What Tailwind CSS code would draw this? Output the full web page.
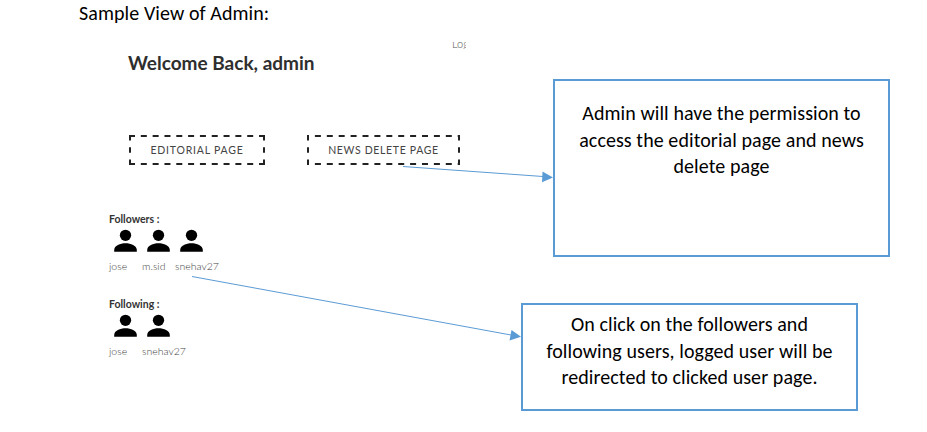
<!DOCTYPE html>
<html lang="en">
<head>
<meta charset="utf-8">
<title>Sample View of Admin</title>
<script src="https://cdn.jsdelivr.net/npm/@tailwindcss/browser@4"></script>
</head>
<body class="bg-white">
<svg class="hidden"><symbol id="person" viewBox="0 0 24 24"><circle cx="12" cy="6.100" r="5.900"/><path d="M.2 23.300v-1.900C.2 16.900 6.500 14.400 12 14.400s11.800 2.500 11.800 7v1.900z"/></symbol></svg>
<main class="relative flex h-[432px] w-[927px] overflow-hidden bg-white font-['Lato','Open_Sans',sans-serif] text-black">
  <section class="flex w-[500px] flex-col">
    <h1 class="ml-[79px] mt-[1px] h-6 whitespace-nowrap text-[20px] tracking-[0.080px] leading-6 font-['Carlito','Lato',sans-serif]">Sample View of Admin:</h1>
    <div class="ml-[452px] mt-[17px] flex h-[7px] w-[14px] items-end overflow-hidden text-[11px] leading-[10px] text-[#555]"><span class="block whitespace-nowrap font-light">Log</span></div>
    <h2 class="ml-[128px] mt-0 h-7 whitespace-nowrap text-[19px] font-bold leading-7 text-[#2e2e2e]">Welcome Back, admin</h2>
    <nav class="ml-[129px] mt-[58px] flex gap-[42px]">
      <button class="relative flex h-[30px] w-[136px] items-center justify-center whitespace-nowrap text-[10.500px] tracking-[0.780px] text-[#444]">
        <svg class="absolute inset-0" width="136" height="30" fill="none" stroke="#222" stroke-width="2"><path d="M0 1H136M0 29H136" stroke-dasharray="6 5.820"/><path d="M1 0V30M135 0V30" stroke-dasharray="5.500 6.750"/></svg>
        <span class="relative top-px">EDITORIAL PAGE</span>
      </button>
      <button class="relative flex h-[30px] w-[153px] items-center justify-center whitespace-nowrap text-[10.500px] tracking-[0.650px] text-[#444]">
        <svg class="absolute inset-0" width="153" height="30" fill="none" stroke="#222" stroke-width="2"><path d="M0 1H153M0 29H153" stroke-dasharray="6 5.900" stroke-dashoffset="4"/><path d="M1 0V30M152 0V30" stroke-dasharray="5.500 6.750"/></svg>
        <span class="relative top-px">NEWS DELETE PAGE</span>
      </button>
    </nav>
    <section class="ml-[109px] mt-[46px] h-[85px] text-[10.500px]">
      <h3 class="h-4 font-bold leading-4 text-[#333]">Followers :</h3>
      <div class="ml-[5px] mt-[2px] flex gap-[10px]">
        <svg class="h-[24px] w-[23px]"><use href="#person"/></svg>
        <svg class="h-[24px] w-[23px]"><use href="#person"/></svg>
        <svg class="h-[24px] w-[23px]"><use href="#person"/></svg>
      </div>
      <div class="mt-[5px] flex h-4 whitespace-nowrap leading-4 font-light text-[#444]">
        <span class="w-[33px]">jose</span><span class="w-[33px]">m.sid</span><span>snehav27</span>
      </div>
    </section>
    <section class="ml-[109px] h-[85px] text-[10.500px]">
      <h3 class="h-4 font-bold leading-4 text-[#333]">Following :</h3>
      <div class="ml-[5px] mt-[2px] flex gap-[10px]">
        <svg class="h-[24px] w-[23px]"><use href="#person"/></svg>
        <svg class="h-[24px] w-[23px]"><use href="#person"/></svg>
      </div>
      <div class="mt-[5px] flex h-4 whitespace-nowrap leading-4 font-light text-[#444]">
        <span class="w-[33px]">jose</span><span>snehav27</span>
      </div>
    </section>
  </section>
  <aside class="flex flex-col text-center text-[20px] tracking-[0.080px] leading-[26.700px] font-['Carlito','Lato',sans-serif]">
    <div class="ml-[53px] mt-[79px] h-[178px] w-[337px] whitespace-nowrap border-2 border-[#5b9bd5] bg-white pt-[19px]">
      <p>Admin will have the permission to<br>access the editorial page and news<br>delete page</p>
    </div>
    <div class="ml-[21px] mt-[46px] h-[108px] w-[337px] whitespace-nowrap border-2 border-[#5b9bd5] bg-white pt-[6px]">
      <p>On click on the followers and<br>following users, logged user will be<br>redirected to clicked user page.</p>
    </div>
  </aside>
  <svg class="pointer-events-none absolute inset-0" width="927" height="432" stroke="#5b9bd5" fill="#5b9bd5">
    <path d="M403 166.500L543 176.500M192 276.500L511 335" stroke-width="1"/>
    <path d="M542.500 171.500L553 177.500L542 182.200zM511.500 330L521 336.700L509.500 340.500z" stroke="none"/>
  </svg>
</main>
</body>
</html></script>
